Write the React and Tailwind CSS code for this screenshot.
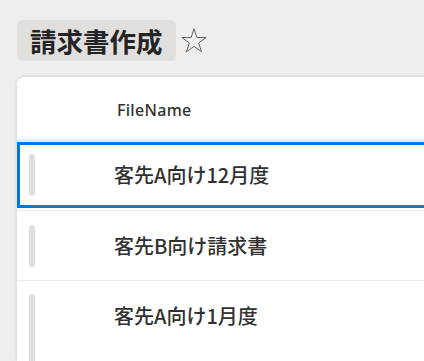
import React from 'react';

const rows = [
  { name: '客先A向け12月度', selected: true },
  { name: '客先B向け請求書' },
  { name: '客先A向け1月度', tall: true },
];

function Star() {
  return (
    <svg width="26" height="25" viewBox="0 0 25 24.5" className="mt-[8px] ml-[5px]">
      <polygon
        points="12.5,0.7 15.32,9.32 24.39,9.34 17.07,14.68 19.85,23.31 12.5,18 5.15,23.31 7.93,14.68 0.61,9.34 9.68,9.32"
        fill="none"
        stroke="#555"
        strokeWidth="0.9"
        strokeLinejoin="miter"
      />
    </svg>
  );
}

function Grip({ tall }) {
  return <div className={`w-[6px] rounded-full bg-[#e1dfdd] shrink-0 ${tall ? 'h-[90px] self-start mt-[13px]' : 'h-[42px]'}`} />;
}

export default function App() {
  return (
    <div
      className="h-[361px] w-[424px] overflow-hidden bg-[#efeeec] flex flex-col"
      style={{ fontFamily: '"Noto Sans", "Noto Sans CJK JP", sans-serif' }}
    >
      {/* Title */}
      <div className="flex items-start pl-[17px] pt-[20px]">
        <div
          className="h-[41px] px-[13px] rounded-md bg-[#e1dfdd] text-[26.5px] leading-[41px] font-bold text-[#242424]"
          style={{ fontFamily: '"Noto Sans CJK JP", sans-serif' }}
        >
          請求書作成
        </div>
        <Star />
      </div>

      {/* Card */}
      <div className="flex-1 ml-[17px] mt-[16px] -mr-[20px] bg-white rounded-tl-lg shadow-[0_0_4px_rgba(0,0,0,0.14)] overflow-hidden">
        <div className="h-[65px] flex items-center pt-[3px] pl-[100px] border-b-[3px] border-[#edebe9]">
          <span className="text-[16px] font-medium text-[#323130] tracking-[0.3px]">FileName</span>
        </div>

        {/* row 1 (selected) */}
        <div className="h-[68px]">
          <div className="h-[66px] border-[3px] border-[#0078d4] flex items-center pl-[9px]">
            <Grip />
            <span
              className="ml-[79px] text-[20px] font-medium text-[#323130]"
              style={{ fontFamily: '"Noto Sans CJK JP", sans-serif' }}
            >
              {rows[0].name}
            </span>
          </div>
        </div>

        {rows.slice(1).map((r) => (
          <div
            key={r.name}
            className={`border-t border-[#edebe9] flex pl-[12px] ${r.tall ? 'h-[100px] items-start' : 'h-[70px] items-center'}`}
          >
            <Grip tall={r.tall} />
            <span
              className={`ml-[79px] text-[20px] font-medium text-[#323130] ${r.tall ? 'mt-[20px]' : ''}`}
              style={{ fontFamily: '"Noto Sans CJK JP", sans-serif' }}
            >
              {r.name}
            </span>
          </div>
        ))}
      </div>
    </div>
  );
}
